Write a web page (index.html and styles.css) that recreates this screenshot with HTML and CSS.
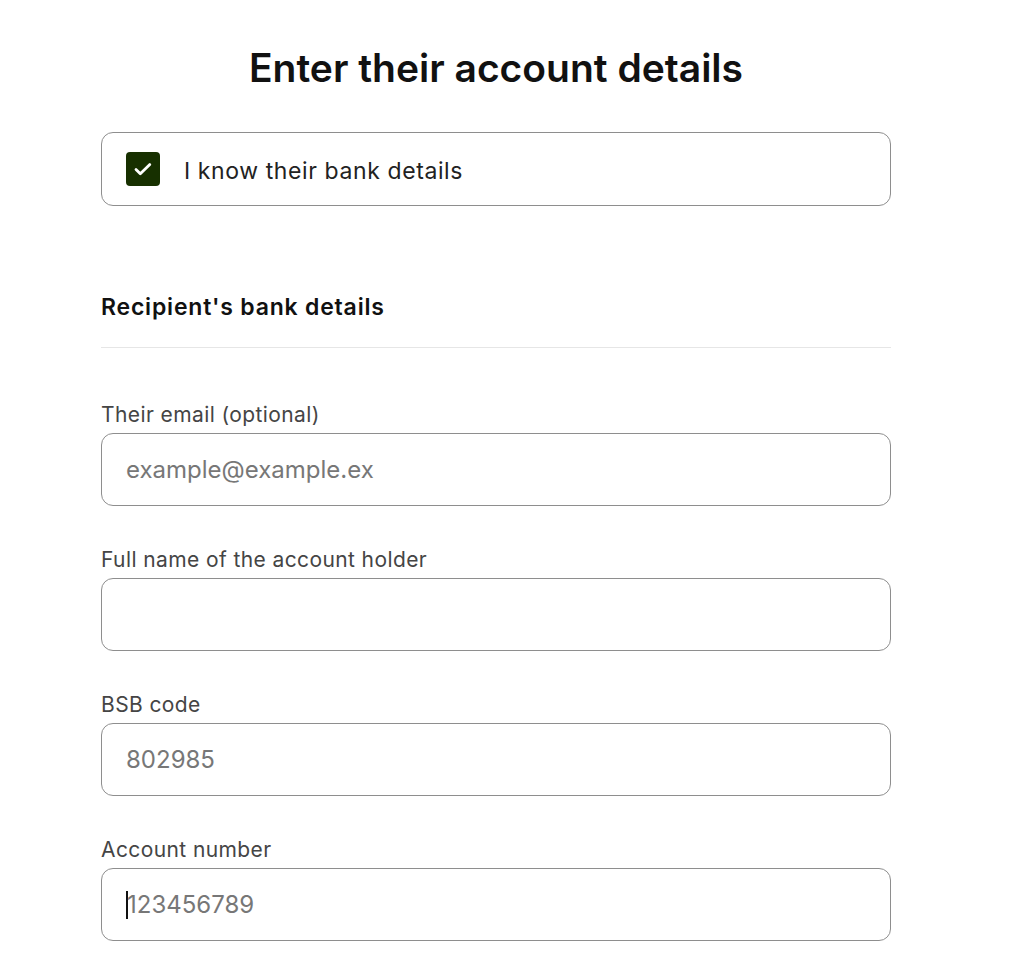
FILE: index.html
```html
<!DOCTYPE html>
<html lang="en">
<head>
    <meta charset="UTF-8">
    <meta name="viewport" content="width=device-width, initial-scale=1.0">
    <title>Enter their account details</title>
    <link rel="stylesheet" href="styles.css">
</head>
<body>
    <div class="container">
        <h1>Enter their account details</h1>

        <label class="check-box">
            <span class="check">
                <svg width="24" height="24" viewBox="0 0 24 24"><path d="M5 12.5l4.3 4.3L18.8 7.6" fill="none" stroke="#fff" stroke-width="2.8" stroke-linecap="round" stroke-linejoin="round"/></svg>
            </span>
            <span class="check-text">I know their bank details</span>
        </label>

        <h2>Recipient's bank details</h2>
        <hr>

        <div class="field">
            <label for="email">Their email (optional)</label>
            <input type="text" id="email" placeholder="example@example.ex">
        </div>

        <div class="field">
            <label for="name">Full name of the account holder</label>
            <input type="text" id="name">
        </div>

        <div class="field">
            <label for="bsb">BSB code</label>
            <input type="text" id="bsb" placeholder="802985">
        </div>

        <div class="field">
            <label for="account">Account number</label>
            <div class="input focus"><span class="caret"></span>123456789</div>
        </div>
    </div>
</body>
</html>
```

FILE: styles.css
```css
body {
    font-family: Inter, "Noto Sans", sans-serif;
    background-color: #fff;
    color: #111;
    margin: 0;
}
.container {
    width: 790px;
    margin-left: 101px;
    padding-top: 42px;
}
h1 {
    font-size: 39px;
    font-weight: 600;
    line-height: 52px;
    text-align: center;
    margin: 0 0 38px;
}
.check-box {
    display: flex;
    align-items: center;
    gap: 24px;
    height: 74px;
    box-sizing: border-box;
    padding: 0 24px;
    border: 1px solid #8e8e8e;
    border-radius: 12px;
    font-size: 23px;
    letter-spacing: 0.6px;
    color: #222;
}
.check-text {
    padding-top: 3px;
}
.check {
    width: 34px;
    height: 34px;
    border-radius: 4px;
    background-color: #173000;
    display: flex;
    align-items: center;
    justify-content: center;
}
h2 {
    font-size: 23px;
    font-weight: 600;
    line-height: 30px;
    letter-spacing: 0.8px;
    margin: 86px 0 0;
}
hr {
    border: none;
    border-top: 1px solid #e6e6e6;
    margin: 25px 0 54px;
}
.field {
    margin-bottom: 41px;
}
.field label {
    display: block;
    font-size: 21px;
    line-height: 26px;
    letter-spacing: 0.4px;
    color: #454545;
    margin-bottom: 5px;
}
.field input,
.input {
    display: flex;
    align-items: center;
    width: 100%;
    height: 73px;
    box-sizing: border-box;
    padding: 0 24px;
    border: 1px solid #8e8e8e;
    border-radius: 12px;
    font-family: inherit;
    font-size: 24px;
    color: #222;
    background: #fff;
}
.field input::placeholder {
    color: #777;
}
.input.focus {
    color: #777;
}
.caret {
    width: 2px;
    height: 28px;
    background-color: #111;
    margin-right: -1px;
}
```
